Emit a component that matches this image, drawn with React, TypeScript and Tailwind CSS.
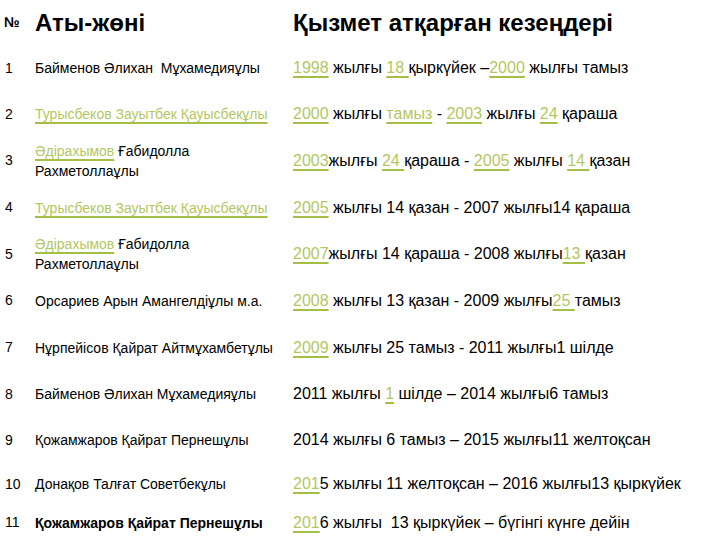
import React from "react";

const G = ({ children }: { children: React.ReactNode }) => (
  <span className="text-[#b3c75e] underline decoration-[#a3bf45] decoration-2 underline-offset-[3px]">{children}</span>
);

type Row = { n: string; name: React.ReactNode; period: React.ReactNode; h: string; bold?: boolean };

const rows: Row[] = [
  {
    n: "1",
    h: "h-[46px]",
    name: <>Байменов Әлихан&nbsp; Мұхамедияұлы</>,
    period: (
      <>
        <G>1998</G> жылғы <G>18 </G>қыркүйек –<G>2000</G> жылғы тамыз
      </>
    ),
  },
  {
    n: "2",
    h: "h-[46px]",
    name: <G>Турысбеков Зауытбек Қауысбекұлы</G>,
    period: (
      <>
        <G>2000</G> жылғы <G>тамыз</G> - <G>2003</G> жылғы <G>24</G> қараша
      </>
    ),
  },
  {
    n: "3",
    h: "h-[47px]",
    name: (
      <>
        <G>Әдірахымов</G> Ғабидолла
        <br />
        Рахметоллаұлы
      </>
    ),
    period: (
      <>
        <G>2003</G>жылғы <G>24 </G>қараша - <G>2005</G> жылғы <G>14 </G>қазан
      </>
    ),
  },
  {
    n: "4",
    h: "h-[47px]",
    name: <G>Турысбеков Зауытбек Қауысбекұлы</G>,
    period: (
      <>
        <G>2005</G> жылғы 14 қазан - 2007 жылғы14 қараша
      </>
    ),
  },
  {
    n: "5",
    h: "h-[46px]",
    name: (
      <>
        <G>Әдірахымов</G> Ғабидолла
        <br />
        Рахметоллаұлы
      </>
    ),
    period: (
      <>
        <G>2007</G>жылғы 14 қараша - 2008 жылғы<G>13 </G>қазан
      </>
    ),
  },
  {
    n: "6",
    h: "h-[47px]",
    name: <>Орсариев Арын Амангелдіұлы м.а.</>,
    period: (
      <>
        <G>2008</G> жылғы 13 қазан - 2009 жылғы<G>25 </G>тамыз
      </>
    ),
  },
  {
    n: "7",
    h: "h-[47px]",
    name: <>Нұрпейісов Қайрат Айтмұхамбетұлы</>,
    period: (
      <>
        <G>2009</G> жылғы 25 тамыз - 2011 жылғы1 шілде
      </>
    ),
  },
  {
    n: "8",
    h: "h-[46px]",
    name: <>Байменов Әлихан Мұхамедияұлы</>,
    period: (
      <>
        2011 жылғы <G>1</G> шілде – 2014 жылғы6 тамыз
      </>
    ),
  },
  {
    n: "9",
    h: "h-[46px]",
    name: <>Қожамжаров Қайрат Пернешұлы</>,
    period: <>2014 жылғы 6 тамыз – 2015 жылғы11 желтоқсан</>,
  },
  {
    n: "10",
    h: "h-[42px]",
    name: <>Донақов Талғат Советбекұлы</>,
    period: (
      <>
        <G>201</G>5 жылғы 11 желтоқсан – 2016 жылғы13 қыркүйек
      </>
    ),
  },
  {
    n: "11",
    h: "h-[35px]",
    bold: true,
    name: <>Қожамжаров Қайрат Пернешұлы</>,
    period: (
      <>
        <G>201</G>6 жылғы&nbsp; 13 қыркүйек – бүгінгі күнге дейін
      </>
    ),
  },
];

export default function App() {
  return (
    <div
      className="w-[720px] h-[540px] overflow-hidden bg-white text-black"
      style={{ fontFamily: '"Liberation Sans", Arial, sans-serif' }}
    >
      <div className="flex items-center h-[45px]">
        <div className="w-[35px] pl-[4px] text-[14px] font-bold">№</div>
        <div className="w-[258px] text-[24px] font-bold">Аты-жөні</div>
        <div className="flex-1 text-[24px] font-bold whitespace-nowrap">Қызмет атқарған кезеңдері</div>
      </div>
      {rows.map((r) => (
        <div key={r.n} className={`flex items-center ${r.h}`}>
          <div className="w-[35px] pl-[5px] text-[14px]">{r.n}</div>
          <div className={`w-[258px] text-[14px] leading-[20px] ${r.bold ? "font-bold" : ""}`}>{r.name}</div>
          <div className="flex-1 text-[16px] whitespace-nowrap">{r.period}</div>
        </div>
      ))}
    </div>
  );
}
